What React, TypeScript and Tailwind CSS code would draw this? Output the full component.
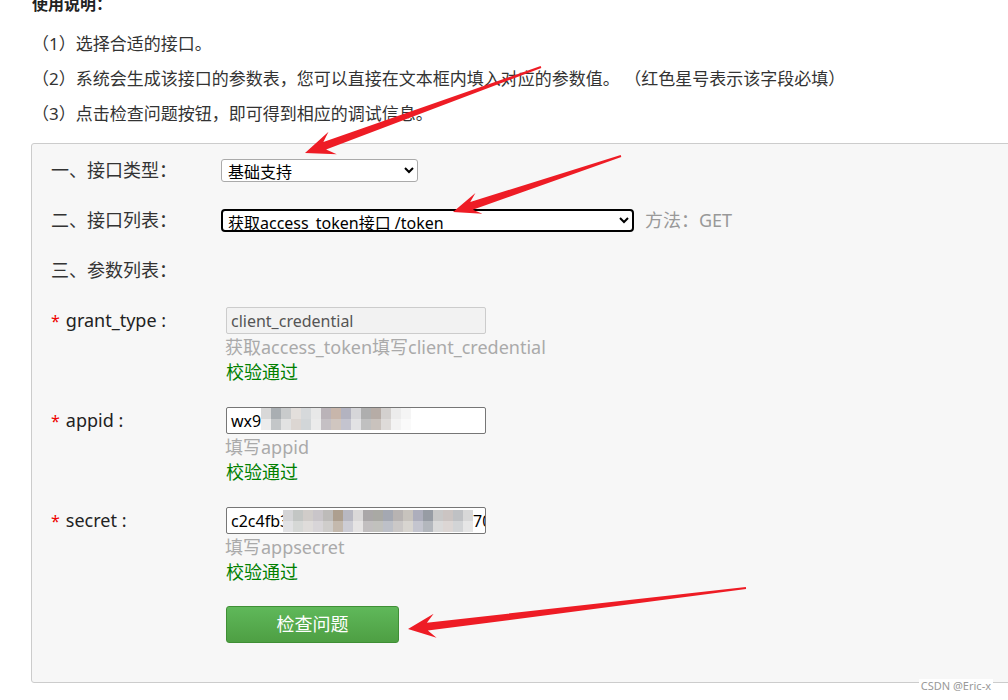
import React from 'react'

type Pt = [number, number]

// red annotation arrow, computed from tail / tip
const Arrow = ({ tail, tip, head = 28, wing = 12, shaft = 4, thin = 1 }: { tail: Pt, tip: Pt, head?: number, wing?: number, shaft?: number, thin?: number }) => {
    const dx = tip[0] - tail[0]
    const dy = tip[1] - tail[1]
    const len = Math.hypot(dx, dy)
    const ux = dx / len
    const uy = dy / len
    const nx = -uy
    const ny = ux
    const at = (back: number, side: number): string =>
        `${tip[0] - ux * back + nx * side},${tip[1] - uy * back + ny * side}`
    const pts = [
        `${tail[0] + nx * thin},${tail[1] + ny * thin}`,
        at(head * 0.75, shaft),
        at(head * 1.05, wing),
        at(0, 0),
        at(head * 1.05, -wing),
        at(head * 0.75, -shaft),
        `${tail[0] - nx * thin},${tail[1] - ny * thin}`,
    ]
    return <polygon points={pts.join(' ')} fill="#ee1c25" />
}

const appidCells = [
    ['#d8d8d8', '#a9aeb2', '#c9cbcc', '#e3dfdc', '#d6d9db', '#e8e8e8', '#bab3b8', '#c8b6ab', '#b3b3c0', '#d6d6d9', '#aeaeae', '#b6aca6', '#d3d0ce', '#ececec', '#f5f5f5'],
    ['#ececec', '#c3c6c8', '#e2e2e2', '#dcd6d2', '#d2d6d8', '#ebebeb', '#c5c0c4', '#d0c6c0', '#c4c4cf', '#e2e2e4', '#c0c0c0', '#c9c2bd', '#dedbd9', '#f3f3f3', '#fafafa'],
]
const secretCells = [
    ['#d4d4d6', '#c3c6c4', '#d0ccc9', '#c9c5c9', '#bdbbb9', '#ad9f8f', '#b8b8c2', '#dad8d8', '#aaa7a8', '#a9a9a4', '#a4a8b2', '#b7b3b2', '#c7c3bd', '#adaebc', '#979ca4', '#c8c8c8', '#cbc4c2', '#bfc1c4', '#d8d8d8'],
    ['#e2e2e4', '#d6d8d6', '#dfdcda', '#d8d5d8', '#cfcdcb', '#c4b9ad', '#cdcdd5', '#e6e4e4', '#c2bfc0', '#c1c1bd', '#bdc0c8', '#cbc8c7', '#d8d5d0', '#c4c5cf', '#b3b7bd', '#dadada', '#dcd6d4', '#d2d4d6', '#e6e6e6'],
]

const Mosaic = ({ cells, className }: { cells: string[][], className: string }) => (
    <div className={`flex flex-col shrink-0 ${className}`}>
        {cells.map((row, r) => (
            <div key={r} className="flex">
                {row.map((c, i) => (
                    <span key={i} className="block w-[10px] h-[11px]" style={{ backgroundColor: c }} />
                ))}
            </div>
        ))}
    </div>
)

const Passed = () => (
    <div className="h-[24px] leading-[24px] text-[18px] text-[#008000]">校验通过</div>
)

const ParamRow = ({ name, hint, children }: { name: string, hint: string, children: React.ReactNode }) => (
    <div className="flex">
        <div className="w-[175px] h-[27px] flex items-center text-[18px] text-[#222]">
            <span className="text-[#e00] text-[16px] mr-[6px]">*</span>
            {name} :
        </div>
        <div className="flex flex-col">
            {children}
            <div className="h-[26px] leading-[26px] text-[18px] text-[#aaa] whitespace-nowrap -ml-px">{hint}</div>
            <Passed />
        </div>
    </div>
)

export default function App() {
    return (
        <div className="relative w-full h-[700px] overflow-hidden bg-white text-[#333]" style={{ fontFamily: '"Noto Sans", "Noto Sans CJK SC", sans-serif' }}>
            <div className="pl-[32px] -mt-[8px] text-[16px] leading-[24px] font-bold text-[#222]">使用说明：</div>
            <div className="pl-[32px] mt-[10px] text-[17px] flex flex-col whitespace-nowrap">
                <div className="h-[35px] leading-[35px]">（1）选择合适的接口。</div>
                <div className="h-[35px] leading-[35px]">（2）系统会生成该接口的参数表，您可以直接在文本框内填入对应的参数值。 （红色星号表示该字段必填）</div>
                <div className="h-[36px] leading-[36px]">（3）点击检查问题按钮，即可得到相应的调试信息。</div>
            </div>

            <div className="ml-[31px] mt-[11px] w-[1000px] h-[540px] bg-[#f7f7f7] border border-[#cccccc] rounded-[3px] pl-[19px] pt-[1px] text-[18px]">
                <div className="flex items-center h-[50px]">
                    <div className="w-[170px]">一、接口类型：</div>
                    <select className="w-[197px] h-[23px] bg-white border border-[#aaaaaa] rounded-[3px] text-[16px] text-black pl-[2px]" defaultValue="a">
                        <option value="a">基础支持</option>
                    </select>
                </div>
                <div className="flex items-center h-[50px]">
                    <div className="w-[170px]">二、接口列表：</div>
                    <select className="w-[413px] h-[23px] bg-white border-2 border-black rounded-[4px] text-[16px] text-black pl-[1px]" defaultValue="a">
                        <option value="a">获取access_token接口 /token</option>
                    </select>
                    <span className="ml-[11px] text-[18px] text-[#999]">方法：GET</span>
                </div>
                <div className="flex items-center h-[50px]">
                    <div className="w-[170px]">三、参数列表：</div>
                </div>

                <div className="mt-[12px] flex flex-col gap-[23px]">
                    <ParamRow name="grant_type" hint="获取access_token填写client_credential">
                        <div className="w-[260px] h-[27px] border border-[#cccccc] rounded-[2px] bg-[#f2f2f2] px-[4px] flex items-center text-[16px] text-[#555]">client_credential</div>
                    </ParamRow>
                    <ParamRow name="appid" hint="填写appid">
                        <div className="w-[260px] h-[27px] border border-[#767676] rounded-[2px] bg-white px-[4px] flex items-center text-[16px] text-black">
                            wx9
                            <Mosaic cells={appidCells} className="-mt-[4px]" />
                        </div>
                    </ParamRow>
                    <ParamRow name="secret" hint="填写appsecret">
                        <div className="w-[260px] h-[27px] border border-[#767676] rounded-[2px] bg-white pl-[4px] flex items-center text-[16px] text-black overflow-hidden whitespace-nowrap">
                            <span className="w-[52px] shrink-0 overflow-hidden">c2c4fb3</span>
                            <Mosaic cells={secretCells} className="" />
                            <span className="shrink-0">70</span>
                        </div>
                    </ParamRow>
                </div>

                <button className="mt-[22px] ml-[175px] w-[173px] h-[37px] rounded-[3px] border border-[#3f8f35] bg-gradient-to-b from-[#5fb85a] to-[#4e9f43] text-white text-[18px]">
                    检查问题
                </button>
            </div>

            <div className="absolute right-[15px] top-[679px] text-[11px] text-[#999] bg-white px-[2px] leading-[14px]">CSDN @Eric-x</div>

            <svg className="absolute inset-0 pointer-events-none" width="1008" height="700">
                <Arrow tail={[541, 67]} tip={[305, 153]} head={28} wing={12} shaft={4} />
                <Arrow tail={[621, 156]} tip={[453, 212]} head={26} wing={11} shaft={4} />
                <Arrow tail={[746, 588]} tip={[408, 629]} head={26} wing={12} shaft={4} />
            </svg>
        </div>
    )
}
